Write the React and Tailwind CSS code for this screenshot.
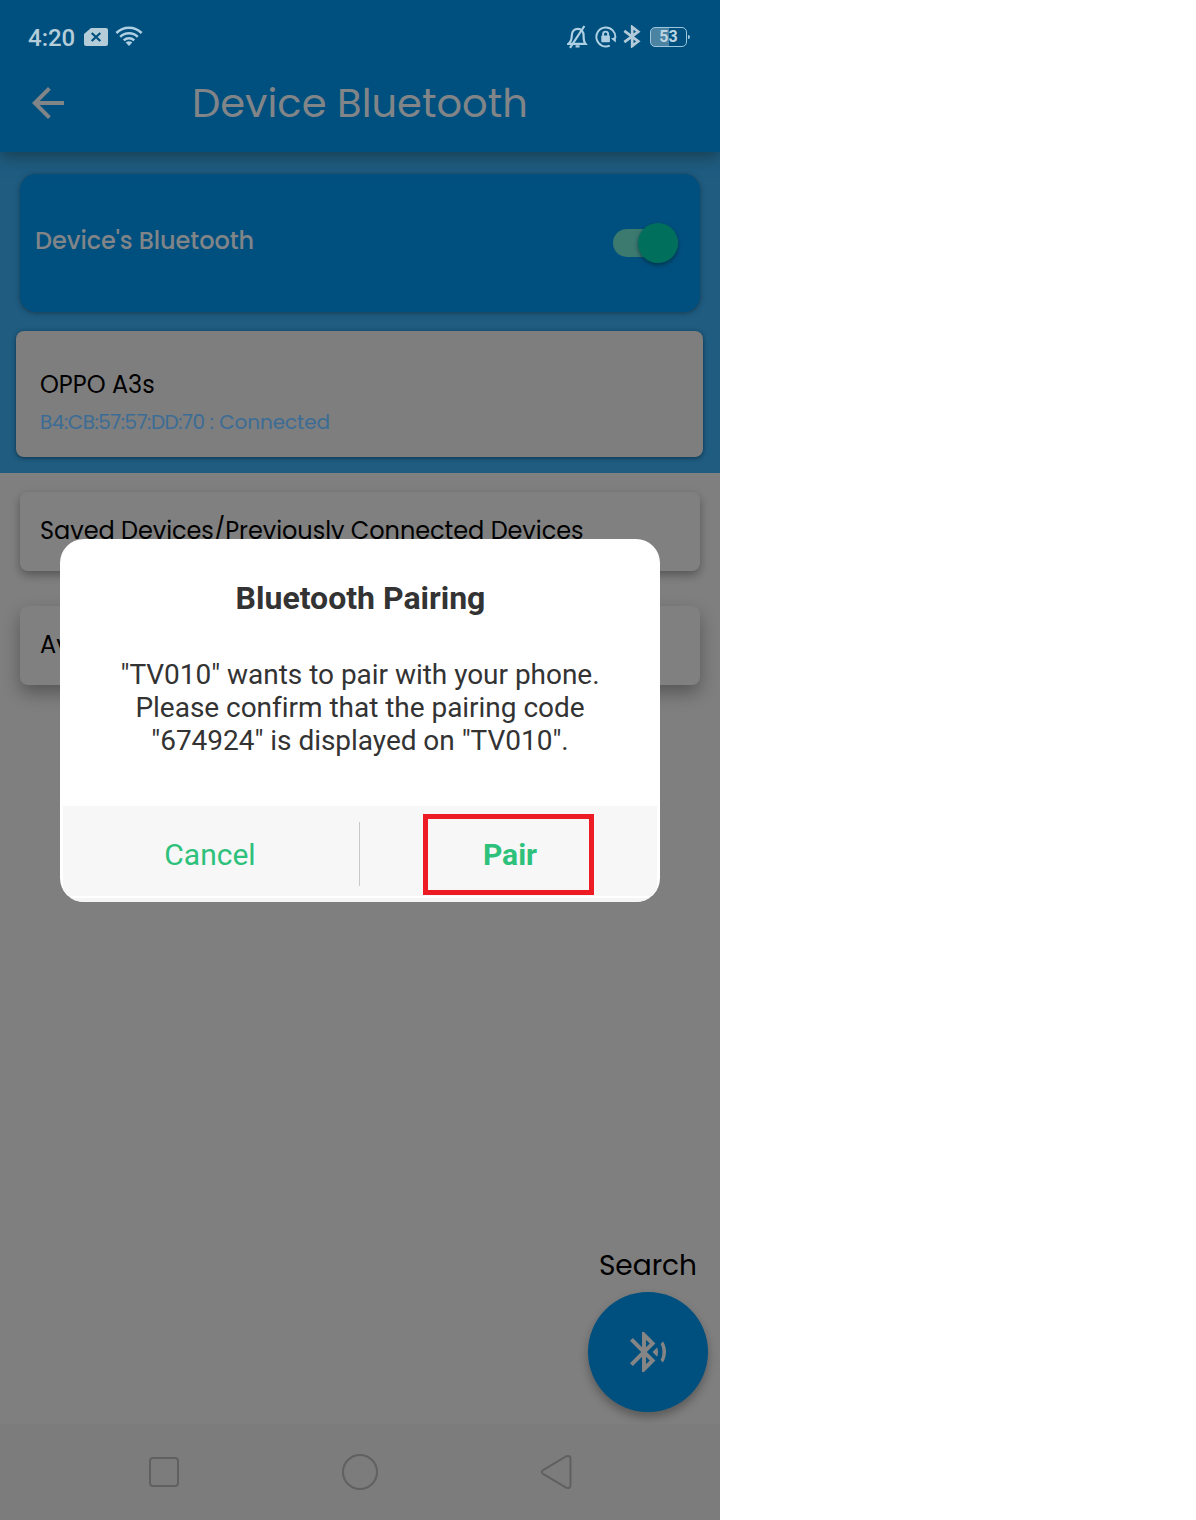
import React from "react";

const appFont = "font-['Poppins','Inter',sans-serif]";

function StatusBar() {
  return (
    <div className="flex h-[73px] items-center justify-between pl-7 pr-[30px] text-[#afd0e2]">
      <div className="flex items-center">
        <span className="w-[56px] font-['Roboto',sans-serif] text-[24px] font-medium leading-[30px] pt-[2px] text-[#b5cdd9]">4:20</span>
        <svg width="24" height="18" viewBox="0 0 24 18">
          <path d="M7 0H22a2 2 0 0 1 2 2V16a2 2 0 0 1-2 2H2a2 2 0 0 1-2-2V6Z" fill="#b5cdd9" />
          <path d="M7.7 5l8.6 8M16.3 5l-8.6 8" stroke="#00507f" strokeWidth="2.2" />
        </svg>
        <svg className="ml-[7px] mb-[2px]" width="28" height="20" viewBox="0 0 28 20" fill="none" stroke="currentColor" strokeWidth="2.5">
          <path d="M1.4 7a17.8 17.8 0 0 1 25.2 0M5.2 10.9a12.4 12.4 0 0 1 17.6 0M8.8 14.4a7.4 7.4 0 0 1 10.4 0" />
          <path d="M14 20l-3.3-3.4a4.7 4.7 0 0 1 6.6 0Z" fill="currentColor" stroke="none" />
        </svg>
      </div>
      <div className="flex items-center">
        <svg width="22" height="24" viewBox="0 0 22 24" fill="none" stroke="currentColor" strokeWidth="2.2">
          <path d="M1.5 18.8H18.4C16.5 16.6 16.6 14.5 16.6 10.5C16.6 6.4 14 3.8 10.8 3.8S4.8 6.4 4.8 10.5C4.8 14.5 4.2 16.6 1.5 18.8Z" />
          <path d="M17.4 1L3 22.8M8.6 21.4h4" />
        </svg>
        <svg className="ml-[6px]" width="22" height="22" viewBox="0 0 22 22" fill="none" stroke="currentColor" strokeWidth="1.9">
          <path d="M14.8 19.6A9.5 9.5 0 1 1 20.3 12" />
          <path d="M16 12.6L20.8 16.4V11Z" fill="currentColor" stroke="none" />
          <rect x="6.3" y="9.5" width="8.6" height="6.8" rx="0.8" fill="currentColor" stroke="none" />
          <path d="M8.1 10V8.1a2.5 2.5 0 0 1 5 0V10" />
        </svg>
        <svg className="ml-[6px]" width="18" height="23" viewBox="0 0 18 23" fill="none" stroke="#b3cbd8" strokeWidth="2.7">
          <path d="M1.3 5.8L15.3 16.3L9.2 21V2L15.3 6.7L1.3 17.2" />
        </svg>
        <div className="ml-[9px] flex h-5 w-[37px] items-center justify-center rounded-[5px] border-[1.5px] border-[#9cc6dc] bg-linear-to-r from-[#4b83a3] from-50% to-[#00507f] to-50% font-['Roboto',sans-serif] text-[16px] font-bold leading-none text-[#bdd5e1]">53</div>
        <div className="ml-[1px] h-1 w-[2px] rounded-r bg-[#9cc6dc]" />
      </div>
    </div>
  );
}

function AppHeader() {
  return (
    <header className="relative z-10 h-[152px] bg-[#00507f] shadow-[0_5px_14px_rgba(22,60,75,0.85)]">
      <StatusBar />
      <div className="flex h-[60px] items-center pl-8">
        <svg width="32" height="32" viewBox="4 4 16 16" fill="#828588"><path d="M20 11H7.83l5.59-5.59L12 4l-8 8 8 8 1.41-1.41L7.83 13H20v-2z" /></svg>
        <h1 className="ml-[128px] whitespace-nowrap text-[40px] font-normal leading-none text-[#828588]">Device Bluetooth</h1>
      </div>
    </header>
  );
}

function PairingDialog() {
  return (
    <div className="absolute left-[60px] top-[539px] flex h-[363px] w-[600px] flex-col overflow-hidden rounded-[24px] bg-white text-center font-['Roboto',sans-serif] text-[#333]">
      <h2 className="mt-[39px] pl-px text-[32px] font-bold leading-[40px]">Bluetooth Pairing</h2>
      <p className="mt-10 whitespace-nowrap text-[28px] leading-[33px] tracking-[-0.03px]">
        "TV010" wants to pair with your phone.<br />Please confirm that the pairing code<br />"674924" is displayed on "TV010".
      </p>
      <div className="mx-[3px] mt-auto flex h-[90px] items-center bg-[#f7f7f7] text-[30px] leading-none text-[#2ec17b]">
        <button className="w-[296px] pt-[8px] pr-[2px]">Cancel</button>
        <div className="mt-[6px] h-16 w-px bg-[#c8c8c8]" />
        <button className="ml-[63px] mt-[7px] h-[81px] w-[171px] border-[5px] border-[#ed1c24] pl-[3px] font-bold">Pair</button>
      </div>
      <div className="mt-[2px] h-1 shrink-0 bg-[#f5f5f5]" />
    </div>
  );
}

export default function App() {
  return (
    <div className="min-h-[1520px] bg-white">
      <main className={`relative flex h-[1520px] w-[720px] flex-col overflow-hidden bg-[#7f7f7f] text-black ${appFont}`}>
        <AppHeader />
        <section className="h-[321px] bg-[#1f5c80] pt-[22px]">
          <div className="mx-5 flex h-[138px] items-center justify-between rounded-[16px] bg-[#00507f] pl-[15px] pr-[22px] shadow-[0_1px_5px_rgba(20,55,75,0.9)]">
            <span className="pb-[4px] text-[24px] font-medium leading-none tracking-[-0.07px] text-[#828588]">Device's Bluetooth</span>
            <div className="flex h-[28px] w-[65px] items-center justify-end rounded-full bg-[#3c7a70]">
              <div className="size-10 rounded-full bg-[#00705d] shadow-[0_2px_4px_rgba(0,35,45,0.6)]" />
            </div>
          </div>
          <div className="ml-4 mr-[17px] mt-[19px] h-[126px] rounded-[8px] bg-[#7e7e7e] pl-6 pt-[41px] shadow-[0_1px_4px_rgba(10,40,60,0.8)]">
            <div className="text-[24px] leading-[26px]">OPPO A3s</div>
            <div className="mt-[12px] text-[20px] leading-[24px] text-[#3b6c96]"><span className="tracking-[-0.47px]">B4:CB:57:57:DD:70</span><span className="tracking-[-0.1px]"> : Connected</span></div>
          </div>
        </section>
        <div className="mx-5 mt-[19px] h-[79px] shrink-0 rounded-[8px] bg-[#808080] pl-5 pt-[25px] text-[24px] leading-[28px] tracking-[-0.05px] shadow-[0_4px_10px_rgba(0,0,0,0.32)]">Saved Devices/Previously Connected Devices</div>
        <div className="mx-5 mt-[35px] h-[79px] shrink-0 rounded-[8px] bg-[#808080] pl-5 pt-[25px] text-[24px] leading-[28px] shadow-[0_8px_18px_rgba(0,0,0,0.32)]">Available Devices</div>
        <div className="mb-3 mr-3 mt-auto flex flex-col items-end">
          <div className="mb-[10px] mr-[11px] text-[28px] leading-[32px]">Search</div>
          <button className="flex size-[120px] items-center justify-center rounded-full bg-[#00507f] shadow-[0_5px_10px_rgba(0,0,0,0.3)]">
            <svg width="48" height="48" viewBox="0 0 24 24" fill="#858585">
              <path d="M14.24 12.01l2.32 2.32c.28-.72.44-1.51.44-2.33 0-.82-.16-1.59-.43-2.31l-2.33 2.32zm5.29-5.3l-1.26 1.26c.63 1.21.98 2.57.98 4.02s-.36 2.82-.98 4.02l1.2 1.2c.97-1.54 1.54-3.36 1.54-5.31-.01-1.89-.55-3.67-1.48-5.19zm-3.82 1L10 2H9v7.59L4.41 5 3 6.41 8.59 12 3 17.59 4.41 19 9 14.41V22h1l5.71-5.71-4.3-4.29 4.3-4.29zM11 5.83l1.88 1.88L11 9.59V5.83zm1.88 10.46L11 18.17v-3.76l1.88 1.88z" />
            </svg>
          </button>
        </div>
        <nav className="relative flex h-24 shrink-0 items-center bg-[#7c7c7c] pl-[149px]">
          <div className="size-[30px] rounded-[4px] border-2 border-[#606060]" />
          <div className="ml-[163px] size-9 rounded-full border-2 border-[#606060]" />
          <svg className="ml-[162px]" width="32" height="36" viewBox="0 0 32 36" fill="none" stroke="#606060" strokeWidth="2" strokeLinejoin="round">
            <path d="M26.5 2.2L3 16.2Q0.5 18 3 19.8L26.5 33.8Q30.5 34.8 30.5 31V5Q30.5 1.2 26.5 2.2Z" />
          </svg>
        </nav>
        <PairingDialog />
      </main>
    </div>
  );
}
